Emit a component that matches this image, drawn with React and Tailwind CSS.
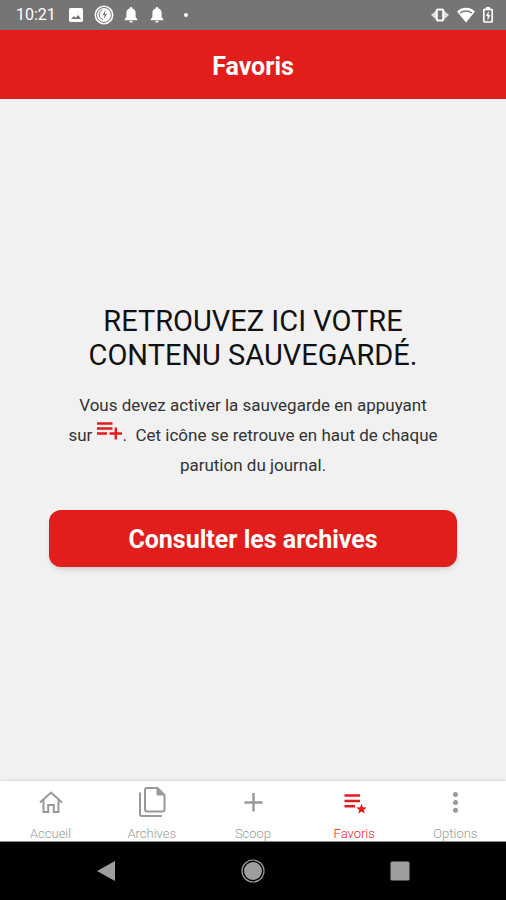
import React, { useState } from 'react';

const PictureIcon = () => (
  <svg viewBox="0 0 16 16" className="w-4 h-4" aria-hidden="true">
    <rect x="1" y="1" width="14" height="14" rx="1.5" fill="#fff" />
    <path d="M3.2 12 5.8 9 7.600 10.800 10.200 8 13 12z" fill="#757575" />
  </svg>
);

const BadgeIcon = () => (
  <svg viewBox="0 0 20 20" className="w-5 h-5" fill="none" aria-hidden="true">
    <circle cx="10" cy="10" r="8.700" stroke="#fff" strokeWidth="1.600" />
    <circle cx="10" cy="10" r="6.900" fill="#fff" />
    <path d="M8.400 4.800C5.800 5.800 4.800 8.200 5.400 10.800c.5 2 1.800 3.200 3.600 3.800" stroke="#757575" strokeWidth="1" />
    <path d="M11.400 5 8.600 10.200h2l-.8 4 3.200-5.400h-2z" fill="#757575" />
  </svg>
);

const BellIcon = () => (
  <svg viewBox="0 0 14 16" className="h-4 w-[14px]" fill="#fff" aria-hidden="true">
    <path d="M7 0c.8 0 1.200.6 1.200 1.300C10.400 1.900 11.600 3.800 11.600 6v4L13.200 12v1.200H.8V12l1.600-2V6c0-2.200 1.200-4.100 3.400-4.700C5.800.6 6.200 0 7 0z" />
    <path d="M5.400 14h3.200c0 1-.7 1.600-1.600 1.600S5.400 15 5.400 14z" />
  </svg>
);

const VibrateIcon = () => (
  <svg viewBox="0 0 20 16" className="w-5 h-4" fill="none" aria-hidden="true">
    <path d="M6 3.500 1 8l5 4.500zM14 3.500 19 8l-5 4.500z" fill="#fff" opacity=".75" />
    <rect x="6.800" y="2.500" width="6.400" height="11" rx="1" stroke="#fff" strokeWidth="2" />
  </svg>
);

const WifiIcon = () => (
  <svg viewBox="0 0 20 16" className="w-5 h-4" aria-hidden="true">
    <path d="M10 15.500 1 4.600C3.200 2.200 6.400.8 10 .8s6.800 1.400 9 3.800z" fill="#fff" />
    <path d="M4 6c3.600-2.400 8.400-2.400 12 0" stroke="#757575" strokeWidth="1.300" fill="none" />
  </svg>
);

const BatteryIcon = () => (
  <svg viewBox="0 0 12 16" className="w-3 h-4" fill="none" aria-hidden="true">
    <rect x="1.800" y="2.300" width="8.400" height="12.700" rx="1" stroke="#fff" strokeWidth="1.700" />
    <path d="M4 0h4v2H4z" fill="#fff" />
    <path d="M6.800 4 3.800 9h1.800v4.500L8.400 8H6.500z" fill="#fff" />
  </svg>
);

const ListAddIcon = () => (
  <svg viewBox="0 0 26 20" className="inline-block align-baseline w-[26px] h-5" fill="none" stroke="#e21b1b" aria-hidden="true">
    <path d="M0 2.500h15.500M0 7.500h15.500M0 12.500h10" strokeWidth="2.400" />
    <path d="M18.800 6.500v12M12.500 12.500h12.500" strokeWidth="2.400" />
  </svg>
);

const HomeIcon = () => (
  <svg viewBox="0 0 32 32" className="w-8 h-8" fill="none" stroke="currentColor" strokeWidth="2" aria-hidden="true">
    <path d="M5 16.500 16 6.500l11 10" />
    <path d="M8.500 14v12h4.700v-7h5.600v7h4.700V14" />
  </svg>
);

const ArchivesIcon = () => (
  <svg viewBox="0 0 32 32" className="w-8 h-8" fill="none" stroke="currentColor" strokeWidth="2" strokeLinejoin="round" aria-hidden="true">
    <path d="M11 2h10.500L28.500 9v14.500a2 2 0 0 1-2 2H11a2 2 0 0 1-2-2V4a2 2 0 0 1 2-2z" />
    <path d="M21 2.500V9h7z" fill="currentColor" strokeWidth="1" />
    <path d="M4 6.500V28a2 2 0 0 0 2 2h20" />
  </svg>
);

const PlusIcon = () => (
  <svg viewBox="0 0 32 32" className="w-8 h-8" fill="none" stroke="currentColor" strokeWidth="2.400" aria-hidden="true">
    <path d="M16.500 7v18.500M7.500 16.500h18" />
  </svg>
);

const FavoriteIcon = () => (
  <svg viewBox="0 0 32 32" className="w-8 h-8" aria-hidden="true">
    <path d="M6.500 9.500h15.500M6.500 15h15.500M6.500 20.300h10.500" fill="none" stroke="currentColor" strokeWidth="2.400" />
    <path d="m23.500 17.800 1.400 3.400 3.700.3-2.800 2.400.9 3.600-3.200-2-3.200 2 .9-3.600-2.800-2.400 3.700-.3z" fill="currentColor" />
  </svg>
);

const OptionsIcon = () => (
  <svg viewBox="0 0 32 32" className="w-8 h-8" fill="currentColor" aria-hidden="true">
    <circle cx="16.500" cy="8.500" r="2.500" />
    <circle cx="16.500" cy="16.500" r="2.500" />
    <circle cx="16.500" cy="24.300" r="2.500" />
  </svg>
);

const tabs = [
  { id: 'accueil', label: 'Accueil', Icon: HomeIcon },
  { id: 'archives', label: 'Archives', Icon: ArchivesIcon },
  { id: 'scoop', label: 'Scoop', Icon: PlusIcon },
  { id: 'favoris', label: 'Favoris', Icon: FavoriteIcon },
  { id: 'options', label: 'Options', Icon: OptionsIcon },
];

const StatusBar = () => (
  <div className="flex items-center justify-between h-[30px] pl-4 pr-3 bg-[#757575] text-white">
    <div className="flex items-center gap-3">
      <span className="text-base">10:21</span>
      <div className="flex items-center gap-[10px]">
        <PictureIcon />
        <BadgeIcon />
        <BellIcon />
      </div>
      <BellIcon />
      <span className="w-1 h-1 ml-2 bg-white rounded-full" />
    </div>
    <div className="flex items-center gap-[6px]">
      <VibrateIcon />
      <WifiIcon />
      <BatteryIcon />
    </div>
  </div>
);

const App = () => {
  const [activeTab, setActiveTab] = useState('favoris');

  return (
    <div className="flex flex-col min-h-screen bg-[#f1f1f1] font-['Roboto',sans-serif]">
      <StatusBar />

      <header className="flex items-center justify-center h-[69px] pt-1 bg-[#e21e1c]">
        <h1 className="text-[25px] leading-8 font-bold text-white">Favoris</h1>
      </header>

      <main className="flex flex-col justify-center flex-grow px-[49px] pb-[10px] text-center">
        <h2 className="text-[29px] leading-[34px] text-[#111]">
          RETROUVEZ ICI VOTRE
          <br />
          CONTENU SAUVEGARDÉ.
        </h2>
        <p className="px-3 mt-[18px] text-[17px] leading-[30px] text-[#333]">
          Vous devez activer la sauvegarde en appuyant{' '}
          <span className="whitespace-nowrap">
            sur <ListAddIcon />.&nbsp;
          </span>{' '}
          Cet icône se retrouve en haut de chaque parution du journal.
        </p>
        <button
          type="button"
          onClick={() => setActiveTab('archives')}
          className="h-[57px] pt-1 mt-[30px] rounded-xl bg-[#e21e1c] text-[25px] leading-8 font-bold text-white shadow-md"
        >
          Consulter les archives
        </button>
      </main>

      {/* Tabs */}
      <nav className="grid grid-cols-5 h-[61px] pt-[5px] bg-white border-b border-[#8a8a8a] shadow-[0_-1px_2px_rgba(0,0,0,0.1)]">
        {tabs.map(({ id, label, Icon }) => (
          <button
            key={id}
            type="button"
            onClick={() => setActiveTab(id)}
            className={`flex flex-col items-center gap-2 ${
              activeTab === id ? 'text-[#e21b1b]' : 'text-[#999]'
            }`}
          >
            <Icon />
            <span className="text-[13px] leading-4 font-light">{label}</span>
          </button>
        ))}
      </nav>

      {/* System navigation */}
      <div className="flex items-center justify-around h-[58px] px-[33px] bg-black text-[#9e9e9e]">
        <button type="button" aria-label="Retour">
          <svg viewBox="0 0 24 24" className="w-6 h-6" fill="currentColor">
            <path d="M21 2v20L3 12z" />
          </svg>
        </button>
        <button type="button" aria-label="Écran d'accueil">
          <svg viewBox="0 0 24 24" className="w-6 h-6" fill="currentColor">
            <circle cx="12" cy="12" r="9" />
            <circle cx="12" cy="12" r="11" fill="none" stroke="currentColor" strokeWidth="1.200" />
          </svg>
        </button>
        <button type="button" aria-label="Applications récentes">
          <svg viewBox="0 0 24 24" className="w-6 h-6" fill="currentColor">
            <rect x="2.500" y="2.500" width="19" height="19" rx="1.500" />
          </svg>
        </button>
      </div>
    </div>
  );
};

export default App;
